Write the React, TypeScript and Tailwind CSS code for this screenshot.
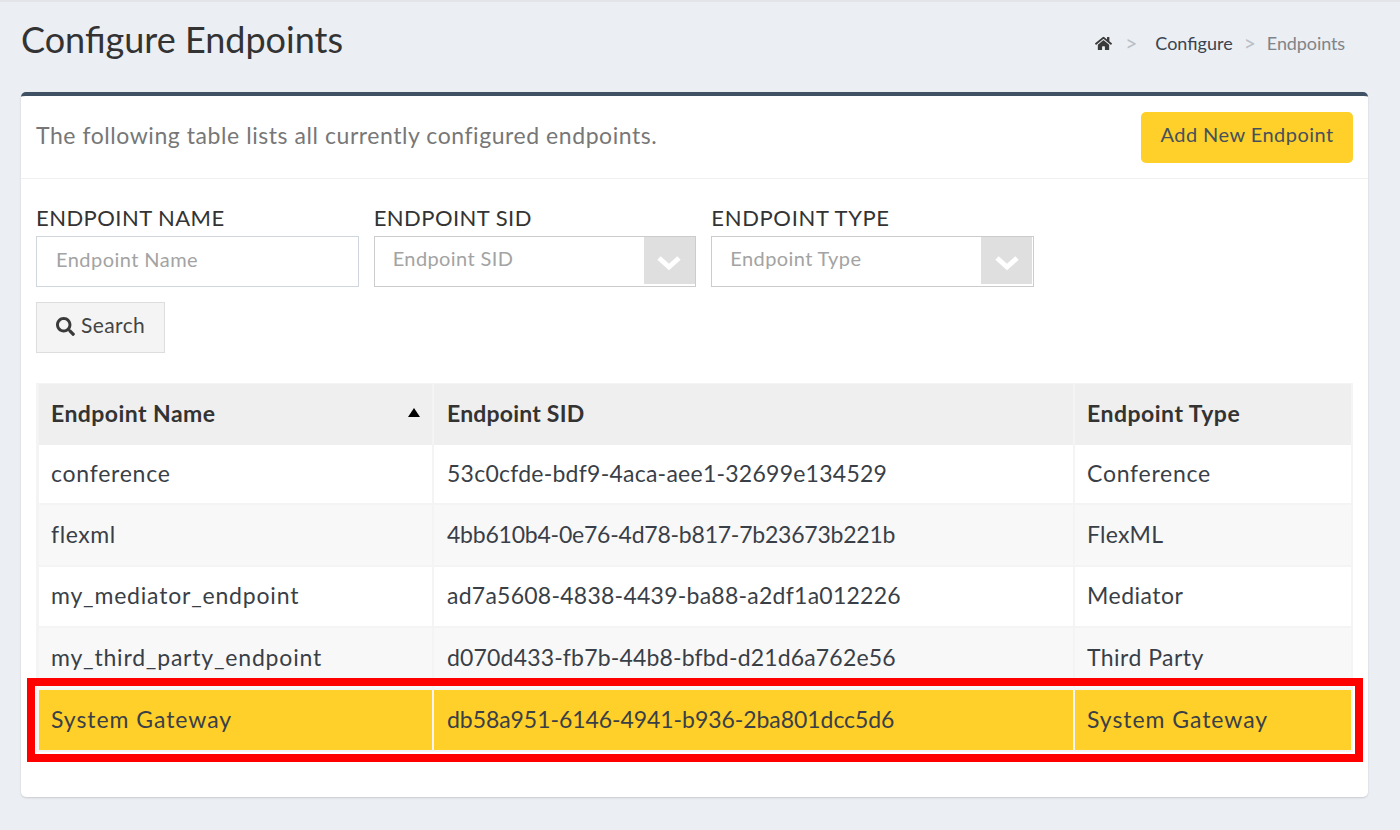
import React from "react";
import { FaHome, FaSearch } from "react-icons/fa";

const font = "font-['Lato','Liberation_Sans',sans-serif]";

const cell = "border-r-2 border-b-2 border-[#f4f4f4]";

const rows = [
  {
    cells: ["conference", "53c0cfde-bdf9-4aca-aee1-32699e134529", "Conference"],
    row: "h-[60px] bg-white",
    t: ["pb-[1px] px-[12px] tracking-[0.75px]", "pb-[1px] px-[13px] tracking-[0.25px]", "pb-[1px] px-[12px] tracking-[0.75px]"],
  },
  {
    cells: ["flexml", "4bb610b4-0e76-4d78-b817-7b23673b221b", "FlexML"],
    row: "h-[62px] bg-[#f8f8f9]",
    t: ["pb-[1px] px-[12px] tracking-[0.6px]", "pb-[1px] px-[13px] tracking-[-0.22px]", "pb-[1px] px-[12px] tracking-[0.25px]"],
  },
  {
    cells: ["my_mediator_endpoint", "ad7a5608-4838-4439-ba88-a2df1a012226", "Mediator"],
    row: "h-[61px] bg-white",
    t: ["pb-[2px] px-[12px] tracking-[0.8px]", "pb-[2px] px-[13px] tracking-[0.25px]", "pb-[2px] px-[12px] tracking-[0.5px]"],
  },
  {
    cells: ["my_third_party_endpoint", "d070d433-fb7b-44b8-bfbd-d21d6a762e56", "Third Party"],
    row: "h-[62px] bg-[#f8f8f9]",
    t: ["pb-[1px] px-[12px] tracking-[0.8px]", "pb-[1px] px-[13px] tracking-[0.17px]", "pb-[1px] px-[12px] tracking-[0.45px]"],
  },
  {
    cells: ["System Gateway", "db58a951-6146-4941-b936-2ba801dcc5d6", "System Gateway"],
    row: "h-[62px] bg-[#ffd029]",
    t: ["pb-[1px] px-[12px] tracking-[0.95px]", "pb-[1px] px-[13px] tracking-[-0.06px]", "pb-[1px] px-[12px] tracking-[0.95px]"],
  },
];

function Select({ placeholder, track }: { placeholder: string; track: string }) {
  return (
    <div>
      <div className={`pb-[2px] text-[22px] leading-[32px] text-[#333] ${track}`}>{placeholder.toUpperCase()}</div>
      <div className="flex h-[51px] items-stretch border border-[#ccc] bg-white pr-[0.5px] pb-[2px] pl-[18px]">
        <div className="flex-1 pt-[4px] text-[20px] leading-[34px] tracking-[0.4px] text-[#a3a3a3]">{placeholder}</div>
        <div className="flex w-[51px] items-center justify-center bg-[#dfdfdf]">
          <svg viewBox="0 0 24 16" className="mt-[5px] h-[16px] w-[24px]" fill="none" stroke="#fff" strokeWidth="5">
            <path d="M2 3 L12 12 L22 3" />
          </svg>
        </div>
      </div>
    </div>
  );
}

export default function App() {
  return (
    <div className={`${font} relative min-h-[830px] border-t-2 border-[#e2e4e8] bg-[#ebeef3] px-[21px] pr-[32px]`}>
      <div className="flex h-[90px] items-start justify-between">
        <h1 className="pt-[15px] text-[36px] leading-[44px] font-normal text-[#333]">Configure Endpoints</h1>
        <div className="flex items-center pt-[28px] pr-[23px] text-[18px] leading-[26px]">
          <FaHome className="h-[17px] w-[17px] text-[#3a3a3a]" />
          <span className="mr-[18px] ml-[13px] text-[21px] text-[#b9bec6]">&gt;</span>
          <span className="text-[#3b4450]">Configure</span>
          <span className="mx-[11px] text-[21px] text-[#b9bec6]">&gt;</span>
          <span className="tracking-[-0.1px] text-[#808488]">Endpoints</span>
        </div>
      </div>
      <div className="h-[705px] rounded-[5px] border-t-4 border-[#3f5162] bg-white shadow-[0_1px_2px_rgba(0,0,0,0.15)]">
        <div className="flex h-[83px] items-center justify-between border-b border-[#f0f0f0] px-[15px]">
          <div className="pb-[3px] text-[23px] tracking-[0.56px] text-[#777]">The following table lists all currently configured endpoints.</div>
          <button className="h-[51px] w-[212px] rounded-[5px] bg-[#ffd029] pb-[7px] text-[20px] tracking-[0.45px] text-[#47515c]">Add New Endpoint</button>
        </div>
        <div className="px-[15px] pt-[23px]">
          <div className="grid w-[998px] grid-cols-3 gap-x-[15px]">
            <div>
              <div className="pb-[2px] text-[22px] leading-[32px] tracking-[0.45px] text-[#333]">ENDPOINT NAME</div>
              <input
                readOnly
                placeholder="Endpoint Name"
                className="h-[51px] w-full border border-[#d0d6de] bg-white px-[19px] pb-[5px] text-[20px] tracking-[0.45px] outline-none placeholder:text-[#a3a3a3]"
              />
            </div>
            <Select placeholder="Endpoint SID" track="tracking-[0.45px]" />
            <Select placeholder="Endpoint Type" track="tracking-[0.65px]" />
          </div>
          <button className="mt-[15px] flex h-[51px] w-[129px] items-center gap-[6px] border border-[#ddd] bg-[#f4f4f4] pb-[6px] pl-[19px] text-[21px] tracking-[0.4px] text-[#444]">
            <FaSearch className="mt-[3px] h-[19px] w-[19px] text-[#3a3a3a]" />
            Search
          </button>
          <table className="mt-[30px] w-[1317px] table-fixed border-separate border-spacing-0 border-t border-l-[3px] border-[#f4f4f4] text-[23px] text-[#3a3f47]">
            <colgroup>
              <col className="w-[395px]" />
              <col className="w-[641px]" />
              <col className="w-[278px]" />
            </colgroup>
            <thead>
              <tr className="h-[61px] bg-[#efefef]">
                <th className="relative border-r-2 border-[#f4f4f4] px-[12px] pb-[3px] text-left font-bold tracking-[0.45px] text-[#333]">
                  Endpoint Name
                  <span className="absolute top-[24px] right-[12px] h-0 w-0 border-x-[6px] border-b-[9px] border-x-transparent border-b-black" />
                </th>
                <th className="border-r-2 border-[#f4f4f4] px-[13px] pb-[3px] text-left font-bold tracking-[0.2px] text-[#333]">Endpoint SID</th>
                <th className="border-r-2 border-[#f4f4f4] px-[12px] pb-[3px] text-left font-bold tracking-[0.5px] text-[#333]">Endpoint Type</th>
              </tr>
            </thead>
            <tbody>
              {rows.map((r) => (
                <tr key={r.cells[0]} className={r.row}>
                  <td className={`${cell} ${r.t[0]}`}>{r.cells[0]}</td>
                  <td className={`${cell} ${r.t[1]}`}>{r.cells[1]}</td>
                  <td className={`${cell} ${r.t[2]}`}>{r.cells[2]}</td>
                </tr>
              ))}
            </tbody>
          </table>
        </div>
      </div>
      <div className="pointer-events-none absolute top-[676px] left-[27px] h-[84px] w-[1336px] border-[8px] border-[#ff0000]" />
    </div>
  );
}
